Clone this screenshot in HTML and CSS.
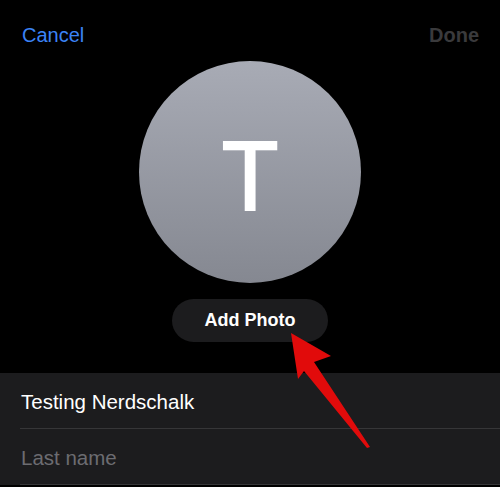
FILE: index.html
```html
<!DOCTYPE html>
<html lang="en">
<head>
<meta charset="utf-8">
<title>Contact</title>
<link rel="stylesheet" href="styles.css">
</head>
<body>
<div class="screen">
  <header class="nav">
    <span class="nav-cancel">Cancel</span>
    <span class="nav-done">Done</span>
  </header>
  <div class="avatar-wrap">
    <div class="avatar"><span class="avatar-letter">T</span></div>
    <div class="add-photo">Add Photo</div>
  </div>
  <section class="form">
    <div class="row"><div class="row-inner"><span class="value">Testing Nerdschalk</span></div></div>
    <div class="row"><div class="row-inner"><span class="placeholder">Last name</span></div></div>
  </section>
  <svg class="arrow" width="500" height="487" viewBox="0 0 500 487" aria-hidden="true">
    <polygon points="291,333 331,356 314,362 370,447 367,448 304,371 298,379" fill="#e10b0b"/>
  </svg>
</div>
</body>
</html>
```
FILE: styles.css
```css
html, body {
  margin: 0;
  padding: 0;
  background: #000;
}
body {
  font-family: "Liberation Sans", Arial, sans-serif;
  width: 500px;
  height: 487px;
  overflow: hidden;
}
.screen {
  position: relative;
  width: 500px;
  height: 487px;
}
.nav {
  display: flex;
  justify-content: space-between;
  padding: 23px 21px 0 22px;
  font-size: 20px;
  line-height: 24px;
}
.nav-cancel {
  color: #3b83f6;
}
.nav-done {
  color: #3a3a3c;
  font-weight: bold;
}
.avatar-wrap {
  display: flex;
  flex-direction: column;
  align-items: center;
  margin-top: 14px;
}
.avatar {
  width: 222px;
  height: 222px;
  border-radius: 50%;
  background: linear-gradient(180deg, #a8abb5 0%, #858891 100%);
  display: flex;
  align-items: center;
  justify-content: center;
}
.avatar-letter {
  color: #fff;
  font-family: Inter, "Liberation Sans", sans-serif;
  font-weight: 500;
  font-size: 96px;
  line-height: 96px;
  padding-top: 7px;
}
.add-photo {
  margin-top: 16px;
  width: 156px;
  height: 43px;
  border-radius: 22px;
  background: #1c1c1e;
  color: #fff;
  font-size: 18px;
  font-weight: bold;
  display: flex;
  align-items: center;
  justify-content: center;
  padding-bottom: 1px;
  box-sizing: border-box;
}
.form {
  margin-top: 31px;
  background: #1c1c1e;
}
.row {
  padding-left: 20px;
}
.row-inner {
  height: 56px;
  border-bottom: 1px solid #363638;
  display: flex;
  align-items: center;
  padding-top: 3px;
  box-sizing: border-box;
  font-size: 20.5px;
  line-height: 24px;
}
.value {
  color: #fff;
  padding-left: 1px;
}
.placeholder {
  color: #6c6c71;
  padding-left: 1px;
}
.arrow {
  position: absolute;
  left: 0;
  top: 0;
  pointer-events: none;
}
```
